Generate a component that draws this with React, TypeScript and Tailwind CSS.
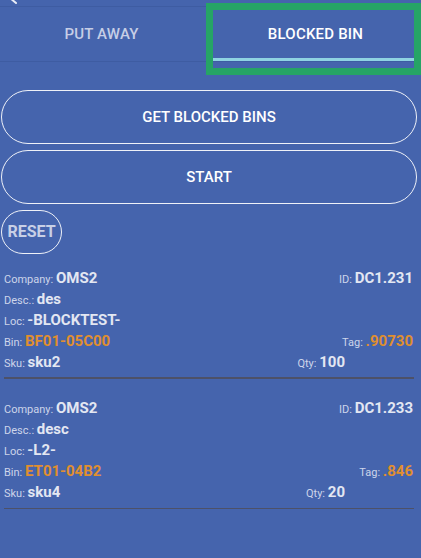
import React from 'react';

type Bin = {
  company: string;
  id: string;
  desc: string;
  loc: string;
  bin: string;
  tag: string;
  sku: string;
  qty: string;
};

const BINS: Bin[] = [
  { company: 'OMS2', id: 'DC1.231', desc: 'des', loc: '-BLOCKTEST-', bin: 'BF01-05C00', tag: '.90730', sku: 'sku2', qty: '100' },
  { company: 'OMS2', id: 'DC1.233', desc: 'desc', loc: '-L2-', bin: 'ET01-04B2', tag: '.846', sku: 'sku4', qty: '20' },
];

function Field({ label, value, orange }: { label: string; value: string; orange?: boolean }) {
  return (
    <span className="whitespace-nowrap">
      <span className="text-[11px] text-[#cdd5ea]">{label} </span>
      <span className={`text-[15px] font-bold ${orange ? 'text-[#e08f2f]' : 'text-[#e3e7f2]'}`}>{value}</span>
    </span>
  );
}

function BinCard({ item }: { item: Bin }) {
  return (
    <div className="mt-[19px] first:mt-0">
      <div className="pl-[4px] pr-[8px]">
        <div className="flex h-[21px] items-center justify-between">
          <Field label="Company:" value={item.company} />
          <Field label="ID:" value={item.id} />
        </div>
        <div className="flex h-[21px] items-center">
          <Field label="Desc.:" value={item.desc} />
        </div>
        <div className="flex h-[21px] items-center">
          <Field label="Loc:" value={item.loc} />
        </div>
        <div className="flex h-[21px] items-center justify-between">
          <Field label="Bin:" value={item.bin} orange />
          <Field label="Tag:" value={item.tag} orange />
        </div>
        <div className="flex h-[21px] items-center justify-between">
          <Field label="Sku:" value={item.sku} />
          <div className="pr-[68px]">
            <Field label="Qty:" value={item.qty} />
          </div>
        </div>
      </div>
      <div className="ml-[4px] mr-[7px] mt-[5px] h-[1.5px] bg-[#4d5168]" />
    </div>
  );
}

export default function App() {
  return (
    <div
      className="relative h-[558px] w-[421px] overflow-hidden bg-[#4564ad]"
      style={{ fontFamily: 'Roboto, "Noto Sans", sans-serif' }}
    >
      {/* top app bar remnant */}
      <div className="h-[7px] border-b border-[#3e5ca2]">
        <svg width="24" height="7" viewBox="0 0 24 7">
          <path d="M10 -2 L16 3" stroke="#e8ecf6" strokeWidth="2" strokeLinecap="round" />
        </svg>
      </div>

      {/* tabs */}
      <div className="flex h-[55px] border-b border-[#3e5ca2]">
        <div className="flex w-[203px] items-center justify-center text-[15px] font-medium tracking-[0.2px] text-[#c6cee6]">
          PUT AWAY
        </div>
        <div className="relative ml-[7px] flex flex-1 items-center justify-center text-[15px] font-medium tracking-[0.2px] text-white">
          BLOCKED BIN
          <div className="absolute bottom-0 left-0 right-0 h-[3px] bg-[#8fd3e2]" />
        </div>
      </div>

      {/* highlight box */}
      <div className="absolute left-[206px] top-[3px] h-[72px] w-[215px] border-[7px] border-[#26a466]" />

      {/* actions */}
      <div className="flex flex-col gap-[6px] pl-[1px] pr-[4px] pt-[28px]">
        <button className="h-[54px] rounded-[27px] border-[1.5px] border-[#eef1f8] text-[15px] font-medium text-white">
          GET BLOCKED BINS
        </button>
        <button className="h-[54px] rounded-[27px] border-[1.5px] border-[#eef1f8] text-[15px] font-medium text-white">
          START
        </button>
        <div>
          <button className="h-[44px] w-[61px] rounded-[22px] border-[1.5px] border-[#eef1f8] text-[16px] font-bold text-[#c8d0e6]">
            RESET
          </button>
        </div>
      </div>

      {/* blocked bins */}
      <div className="mt-[13px]">
        {BINS.map((b) => (
          <BinCard key={b.id} item={b} />
        ))}
      </div>
    </div>
  );
}
